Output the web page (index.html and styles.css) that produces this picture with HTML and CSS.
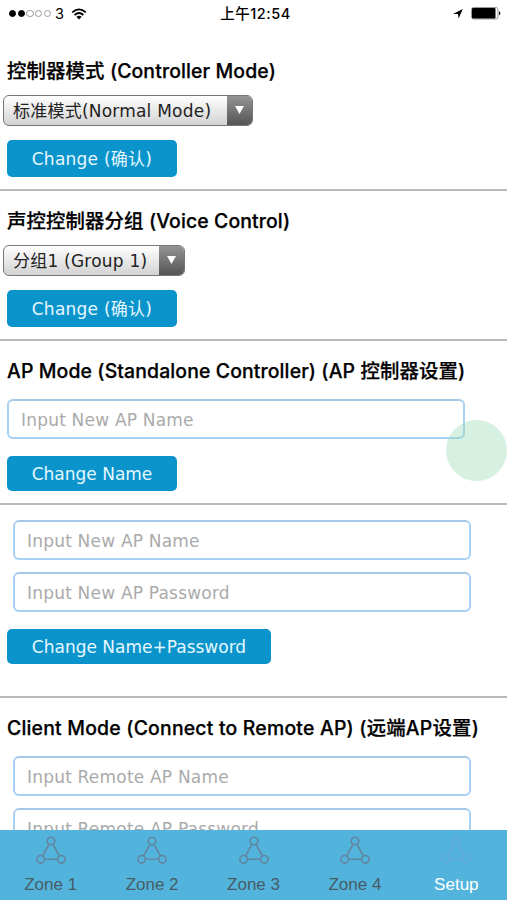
FILE: index.html
```html
<!DOCTYPE html>
<html lang="zh-CN">
<head>
<meta charset="utf-8">
<meta name="viewport" content="width=device-width">
<title>Setup</title>
<link rel="stylesheet" href="styles.css">
</head>
<body>
<svg width="0" height="0" class="defs">
  <symbol id="nodes" viewBox="0 0 32 30">
    <g fill="none" stroke="currentColor" stroke-width="1.6">
      <circle cx="16" cy="5" r="3.8"/><circle cx="5.6" cy="23.3" r="3.8"/><circle cx="26.4" cy="23.3" r="3.8"/>
      <path d="M14.1 8.3 7.5 20M17.9 8.3 24.5 20M9.4 23.3H22.6"/>
    </g>
  </symbol>
</svg>
<header class="status">
  <div class="status-left">
    <span class="signal"><i class="on"></i><i class="on"></i><i></i><i></i><i></i></span>
    <span class="carrier">3</span>
    <svg class="wifi" width="16" height="12" viewBox="0 0 16 12"><g fill="none" stroke="#000" stroke-width="1.8"><path d="M1.2 4.4Q8-1.7 14.8 4.4"/><path d="M3.6 7Q8 3 12.4 7"/></g><path d="M5.4 8.7Q8 6.6 10.6 8.7L8 11.4Z"/></svg>
  </div>
  <span class="time">上午12:54</span>
  <div class="status-right">
    <svg width="10" height="10" viewBox="0 0 10 10"><path d="M0 5 9.8 0 5.6 9.6 5 5Z"/></svg>
    <svg width="30" height="13" viewBox="0 0 30 13"><rect x=".5" y=".5" width="26.5" height="11.5" rx="2" fill="#fff" stroke="#999"/><rect x="1" y="1" width="23.5" height="10.5" rx="1"/><path d="M28 4Q30.5 6.2 28 8.5Z"/></svg>
  </div>
</header>
<main class="content">
  <section>
    <h2>控制器模式 (Controller Mode)</h2>
    <div class="select mode"><span>标准模式(Normal Mode)</span><b><svg width="9" height="8" viewBox="0 0 9 8"><path d="M0 0H9L4.5 8Z" fill="#fff"/></svg></b></div>
    <button class="tall">Change (确认)</button>
  </section>
  <section>
    <h2>声控控制器分组 (Voice Control)</h2>
    <div class="select group"><span>分组1 (Group 1)</span><b><svg width="9" height="8" viewBox="0 0 9 8"><path d="M0 0H9L4.5 8Z" fill="#fff"/></svg></b></div>
    <button class="tall">Change (确认)</button>
  </section>
  <section class="ap">
    <h2>AP Mode (Standalone Controller) (AP 控制器设置)</h2>
    <div class="field">Input New AP Name</div>
    <button>Change Name</button>
  </section>
  <section class="credentials">
    <div class="field">Input New AP Name</div>
    <div class="field">Input New AP Password</div>
    <button class="wide">Change Name+Password</button>
  </section>
  <section class="client">
    <h2>Client Mode (Connect to Remote AP) (远端AP设置)</h2>
    <div class="field">Input Remote AP Name</div>
    <div class="field">Input Remote AP Password</div>
  </section>
</main>
<nav class="tabs">
  <a><svg><use href="#nodes"/></svg><span>Zone 1</span></a>
  <a><svg><use href="#nodes"/></svg><span>Zone 2</span></a>
  <a><svg><use href="#nodes"/></svg><span>Zone 3</span></a>
  <a><svg><use href="#nodes"/></svg><span>Zone 4</span></a>
  <a class="active"><svg><use href="#nodes"/></svg><span>Setup</span></a>
</nav>
<div class="touch"></div>
</body>
</html>
```
FILE: styles.css
```css
* { box-sizing: border-box; }
body {
  margin: 0;
  height: 900px;
  overflow: hidden;
  display: flex;
  flex-direction: column;
  background: #fff;
  color: #000;
  font-family: "DejaVu Sans", "Noto Sans CJK SC", sans-serif;
  font-size: 17px;
}
.defs { position: absolute; }
.status {
  flex: none;
  height: 28px;
  display: grid;
  grid-template-columns: 1fr auto 1fr;
  align-items: center;
  padding: 0 6px 0 9px;
  font-family: Inter, "Noto Sans CJK SC", sans-serif;
  font-size: 14.5px;
}
.status-left, .status-right { display: flex; align-items: center; height: 27px; align-self: start; }
.status-right { justify-content: flex-end; gap: 8px; }
.signal { display: flex; gap: 1.4px; }
.signal i { width: 7.3px; height: 7.3px; border: 1px solid #999; border-radius: 50%; }
.signal .on { background: #000; border-color: #000; }
.carrier { margin: 0 7px 0 4px; }
.time { font-weight: 500; margin: -3px 0 0 1px; letter-spacing: .5px; }
.content { flex: 1; min-height: 0; overflow: hidden; padding-top: 13px; }
section {
  height: 150px;
  padding: 18px 0 0 7px;
  border-bottom: 2px solid #b9b9b9;
}
h2 {
  margin: 0 0 12px;
  height: 24px;
  line-height: 25px;
  font-family: Inter, "Noto Sans CJK SC", sans-serif;
  font-size: 19.4px;
  font-weight: 500;
  letter-spacing: .13px;
  -webkit-text-stroke: .25px #000;
  white-space: nowrap;
}
.client h2 { letter-spacing: .21px; }
.select {
  height: 31px;
  margin: 0 0 14px -4px;
  display: flex;
  overflow: hidden;
  border: 1.5px solid #777;
  border-radius: 6px;
  background: linear-gradient(#fff, #d2d2d2);
  line-height: 30px;
  letter-spacing: .22px;
  white-space: nowrap;
}
.mode { width: 250px; }
.group { width: 182px; }
.select span { flex: 1; padding-left: 9px; color: #222; }
.select b {
  width: 25px;
  display: flex;
  align-items: center;
  justify-content: center;
  padding-bottom: 2px;
  background: linear-gradient(#949494, #555);
}
button {
  display: block;
  width: 170px;
  height: 35px;
  margin: 0;
  padding: 0;
  border: 0;
  border-radius: 5px;
  background: #0a94cb;
  color: #e5f7ff;
  font: inherit;
  line-height: 37px;
  white-space: nowrap;
}
.tall { height: 37px; line-height: 36px; letter-spacing: .25px; }
.wide { width: 264px; }
.field {
  width: 458px;
  height: 40px;
  border: 2px solid #a9d1f3;
  border-top: 2.5px solid #a5c7e8;
  border-radius: 6px;
  padding-left: 12px;
  line-height: 38px;
  color: #aaa;
  letter-spacing: .2px;
  white-space: nowrap;
}
.ap { height: 164px; }
.ap h2, .client h2 { margin-bottom: 16px; }
.ap button { margin-top: 17px; }
.credentials { height: 193px; padding-top: 15px; }
.credentials .field, .client .field { margin: 0 0 11.5px 6px; }
.credentials button { margin-top: 17.5px; }
.client { height: 300px; border: 0; }
.tabs {
  flex: none;
  height: 70.5px;
  display: flex;
  background: #52b4dc;
  font-family: "Liberation Sans", sans-serif;
  font-size: 17px;
}
.tabs a {
  flex: 1;
  display: flex;
  flex-direction: column;
  align-items: center;
  padding-top: 6.5px;
  color: #485c66;
}
.tabs svg { width: 32px; height: 30px; color: #6286a0; }
.tabs span { margin-top: 9px; line-height: 20px; }
.tabs .active { color: #fff; }
.tabs .active svg { color: #62a9dc; }
.touch {
  position: absolute;
  left: 446px;
  top: 420px;
  width: 61px;
  height: 61px;
  border-radius: 50%;
  background: rgba(152, 219, 183, .4);
}
```
